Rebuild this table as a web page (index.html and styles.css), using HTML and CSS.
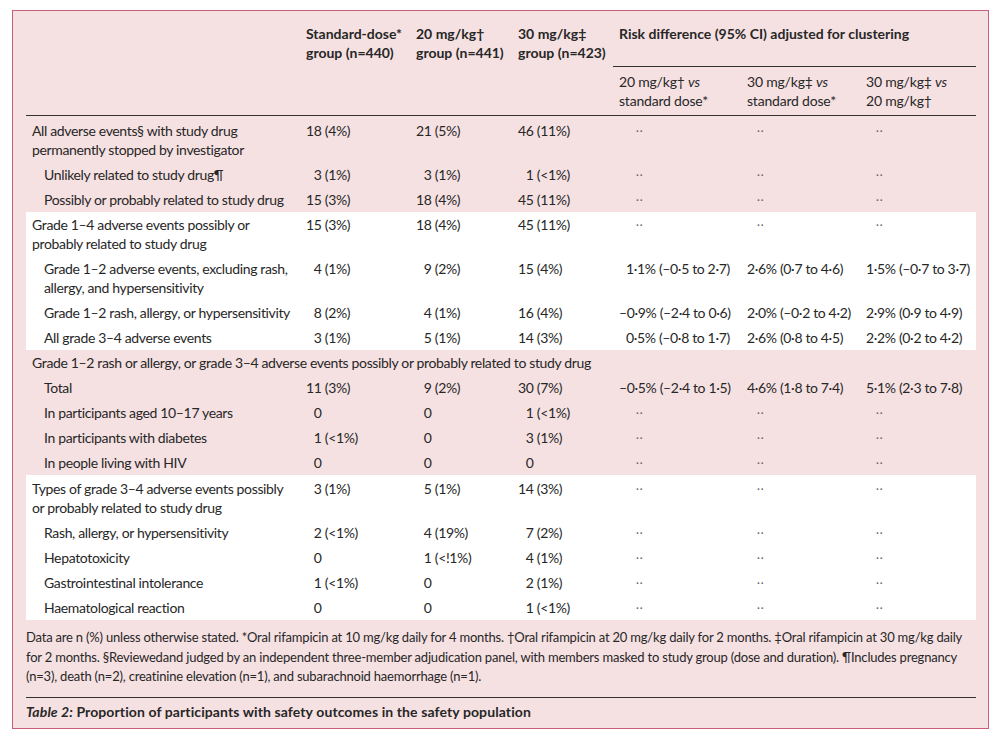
FILE: index.html
```html
<!DOCTYPE html>
<html lang="en">
<head>
<meta charset="utf-8">
<title>Table 2</title>
<link rel="stylesheet" href="styles.css">
</head>
<body>
<div class="box">
  <table class="tbl">
    <colgroup>
      <col class="c-label"><col class="c-std"><col class="c-20"><col class="c-30"><col class="c-r1"><col class="c-r2"><col class="c-r3">
    </colgroup>
    <thead>
      <tr class="h1">
        <th rowspan="2" class="rs"></th>
        <th rowspan="2" class="rs">Standard-dose*<br>group (n=440)</th>
        <th rowspan="2" class="rs">20 mg/kg†<br>group (n=441)</th>
        <th rowspan="2" class="rs">30 mg/kg‡<br>group (n=423)</th>
        <th colspan="3" class="risk">Risk difference (95% CI) adjusted for clustering</th>
      </tr>
      <tr class="h2">
        <th>20 mg/kg† <i>vs</i><br>standard dose*</th>
        <th>30 mg/kg‡ <i>vs</i><br>standard dose*</th>
        <th>30 mg/kg‡ <i>vs</i><br>20 mg/kg†</th>
      </tr>
    </thead>
    <tbody>
      <tr class="first">
        <td>All adverse events§ with study drug<br>permanently stopped by investigator</td>
        <td>18 (4%)</td><td>21 (5%)</td><td>46 (11%)</td>
        <td class="d1">··</td><td class="d">··</td><td class="d">··</td>
      </tr>
      <tr>
        <td class="ind">Unlikely related to study drug¶</td>
        <td>&#8199;3 (1%)</td><td>&#8199;3 (1%)</td><td>&#8199;1 (&lt;1%)</td>
        <td class="d1">··</td><td class="d">··</td><td class="d">··</td>
      </tr>
      <tr>
        <td class="ind">Possibly or probably related to study drug</td>
        <td>15 (3%)</td><td>18 (4%)</td><td>45 (11%)</td>
        <td class="d1">··</td><td class="d">··</td><td class="d">··</td>
      </tr>
    </tbody>
    <tbody class="white">
      <tr>
        <td>Grade 1–4 adverse events possibly or<br>probably related to study drug</td>
        <td>15 (3%)</td><td>18 (4%)</td><td>45 (11%)</td>
        <td class="d1">··</td><td class="d">··</td><td class="d">··</td>
      </tr>
      <tr>
        <td class="ind">Grade 1–2 adverse events, excluding rash,<br>allergy, and hypersensitivity</td>
        <td>&#8199;4 (1%)</td><td>&#8199;9 (2%)</td><td>15 (4%)</td>
        <td><span class="pos">1·1% (–0·5 to 2·7)</span></td><td>2·6% (0·7 to 4·6)</td><td>1·5% (–0·7 to 3·7)</td>
      </tr>
      <tr>
        <td class="ind">Grade 1–2 rash, allergy, or hypersensitivity</td>
        <td>&#8199;8 (2%)</td><td>&#8199;4 (1%)</td><td>16 (4%)</td>
        <td>–0·9% (–2·4 to 0·6)</td><td>2·0% (–0·2 to 4·2)</td><td>2·9% (0·9 to 4·9)</td>
      </tr>
      <tr>
        <td class="ind">All grade 3–4 adverse events</td>
        <td>&#8199;3 (1%)</td><td>&#8199;5 (1%)</td><td>14 (3%)</td>
        <td><span class="pos">0·5% (–0·8 to 1·7)</span></td><td>2·6% (0·8 to 4·5)</td><td>2·2% (0·2 to 4·2)</td>
      </tr>
    </tbody>
    <tbody>
      <tr>
        <td colspan="7">Grade 1–2 rash or allergy, or grade 3–4 adverse events possibly or probably related to study drug</td>
      </tr>
      <tr>
        <td class="ind">Total</td>
        <td>11 (3%)</td><td>&#8199;9 (2%)</td><td>30 (7%)</td>
        <td>–0·5% (–2·4 to 1·5)</td><td>4·6% (1·8 to 7·4)</td><td>5·1% (2·3 to 7·8)</td>
      </tr>
      <tr>
        <td class="ind">In participants aged 10–17 years</td>
        <td>&#8199;0</td><td>&#8199;0</td><td>&#8199;1 (&lt;1%)</td>
        <td class="d1">··</td><td class="d">··</td><td class="d">··</td>
      </tr>
      <tr>
        <td class="ind">In participants with diabetes</td>
        <td>&#8199;1 (&lt;1%)</td><td>&#8199;0</td><td>&#8199;3 (1%)</td>
        <td class="d1">··</td><td class="d">··</td><td class="d">··</td>
      </tr>
      <tr>
        <td class="ind">In people living with HIV</td>
        <td>&#8199;0</td><td>&#8199;0</td><td>&#8199;0</td>
        <td class="d1">··</td><td class="d">··</td><td class="d">··</td>
      </tr>
    </tbody>
    <tbody class="white">
      <tr class="first-w">
        <td>Types of grade 3–4 adverse events possibly<br>or probably related to study drug</td>
        <td>&#8199;3 (1%)</td><td>&#8199;5 (1%)</td><td>14 (3%)</td>
        <td class="d1">··</td><td class="d">··</td><td class="d">··</td>
      </tr>
      <tr>
        <td class="ind">Rash, allergy, or hypersensitivity</td>
        <td>&#8199;2 (&lt;1%)</td><td>&#8199;4 (19%)</td><td>&#8199;7 (2%)</td>
        <td class="d1">··</td><td class="d">··</td><td class="d">··</td>
      </tr>
      <tr>
        <td class="ind">Hepatotoxicity</td>
        <td>&#8199;0</td><td>&#8199;1 (&lt;!1%)</td><td>&#8199;4 (1%)</td>
        <td class="d1">··</td><td class="d">··</td><td class="d">··</td>
      </tr>
      <tr>
        <td class="ind">Gastrointestinal intolerance</td>
        <td>&#8199;1 (&lt;1%)</td><td>&#8199;0</td><td>&#8199;2 (1%)</td>
        <td class="d1">··</td><td class="d">··</td><td class="d">··</td>
      </tr>
      <tr>
        <td class="ind">Haematological reaction</td>
        <td>&#8199;0</td><td>&#8199;0</td><td>&#8199;1 (&lt;1%)</td>
        <td class="d1">··</td><td class="d">··</td><td class="d">··</td>
      </tr>
    </tbody>
  </table>
  <p class="notes">Data are n (%) unless otherwise stated. *Oral rifampicin at 10 mg/kg daily for 4 months. †Oral rifampicin at 20 mg/kg daily for 2 months. ‡Oral rifampicin at 30 mg/kg daily<br>for 2 months. §Reviewedand judged by an independent three-member adjudication panel, with members masked to study group (dose and duration). ¶Includes pregnancy<br>(n=3), death (n=2), creatinine elevation (n=1), and subarachnoid haemorrhage (n=1).</p>
  <p class="caption"><i>Table 2:</i> Proportion of participants with safety outcomes in the safety population</p>
</div>
</body>
</html>
```

FILE: styles.css
```css
html, body {
  margin: 0;
  padding: 0;
  background: #ffffff;
}

body {
  font-family: Lato, "Liberation Sans", sans-serif;
  color: #272727;
}

.box {
  margin: 10px 0 0 12px;
  width: 977px;
  height: 719px;
  box-sizing: border-box;
  border: 1px solid #c9607b;
  background: #f6e1e2;
  padding: 13px 12px 0 13px;
}

.tbl {
  width: 950px;
  border-collapse: collapse;
  table-layout: fixed;
  font-size: 14px;
  line-height: 19px;
}

.c-label { width: 274px; }
.c-std { width: 110px; }
.c-20 { width: 102px; }
.c-30 { width: 101px; }
.c-r1 { width: 128px; }
.c-r2 { width: 119px; }
.c-r3 { width: 116px; }

.tbl td,
.tbl th {
  padding: 3px 6px;
  text-align: left;
  vertical-align: top;
  white-space: nowrap;
  font-weight: normal;
}

.tbl td {
  letter-spacing: -0.35px;
}

.tbl thead th {
  font-weight: bold;
}

.tbl .h1 th {
  padding: 0 6px 23px;
}

.tbl th.rs {
  border-bottom: 1px solid #333;
}

.tbl th.risk {
  border-bottom: 1px solid #333;
}

.tbl .h2 th {
  padding: 5px 6px 5px;
  font-weight: normal;
  letter-spacing: -0.2px;
  border-bottom: 1px solid #333;
}

.tbl .first td {
  padding-top: 5px;
}

.tbl .first-w td {
  padding-top: 4px;
}

.white {
  background: #ffffff;
}

.tbl td.ind {
  padding-left: 18px;
}

.pos {
  padding-left: 7px;
}

.tbl td.d,
.tbl td.d1 {
  color: #666;
  font-size: 11px;
  letter-spacing: 1px;
}

.tbl td.d {
  padding-left: 16px;
}

.tbl td.d1 {
  padding-left: 23px;
}

.notes {
  margin: 8px 0 0;
  font-size: 13px;
  line-height: 19.5px;
  letter-spacing: -0.2px;
  white-space: nowrap;
}

.caption {
  margin: 10px 0 0;
  padding-top: 4px;
  border-top: 1px solid #333;
  font-size: 14px;
  line-height: 19px;
  font-weight: bold;
  letter-spacing: 0.1px;
}
```
